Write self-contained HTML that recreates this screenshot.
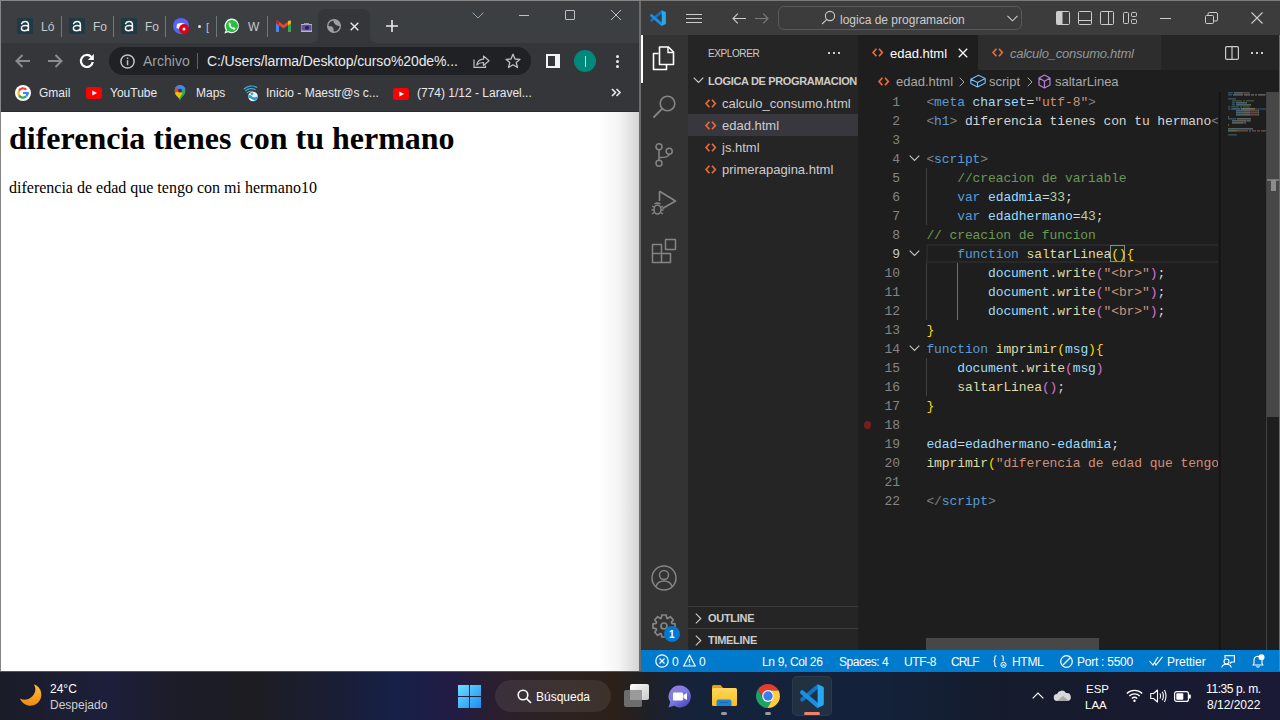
<!DOCTYPE html>
<html><head><meta charset="utf-8">
<style>
*{box-sizing:border-box;margin:0;padding:0}
html,body{width:1280px;height:720px;overflow:hidden;background:#1b1b1f;font-family:"Liberation Sans",sans-serif}
.a{position:absolute}
.t{position:absolute;white-space:pre;line-height:1}
svg{position:absolute;overflow:visible}
</style></head><body>

<!-- ============ CHROME WINDOW ============ -->
<div class="a" style="left:0;top:0;width:641px;height:672px;background:#868686"></div>
<div class="a" style="left:639px;top:1px;width:2px;height:671px;background:#6c6c6c"></div>
<div class="a" style="left:0px;top:671px;width:641px;height:1px;background:#555555"></div>
<div class="a" id="tabstrip" style="left:1px;top:1px;width:638px;height:42px;background:#3c3f42"></div>
<div class="a" id="toolbar" style="left:1px;top:43px;width:638px;height:69px;background:#35363a"></div>
<div class="a" id="page" style="left:1px;top:112px;width:638px;height:559px;background:#fff"></div>
<div class="a" style="left:598px;top:112px;width:41px;height:559px;background:linear-gradient(90deg,rgba(0,0,0,0) 0%,rgba(0,0,0,0.04) 50%,rgba(0,0,0,0.17) 100%)"></div>


<!-- tabs -->
<div class="a" style="left:17px;top:18px;width:16px;height:16px;background:#1f3a44"></div>
<svg style="left:17px;top:18px" width="16" height="16" viewBox="0 0 16 16"><path d="M4.6 5.6 Q5.6 3.6 8.2 3.6 Q11.4 3.6 11.4 7 V12.6 M11.4 9.3 Q11.4 7.6 8.2 7.6 Q4.4 7.6 4.4 10.2 Q4.4 12.7 7.6 12.7 Q10.4 12.7 11.4 10.6" stroke="#f4f4f4" stroke-width="1.5" fill="none" stroke-linecap="round"/></svg>
<div class="t" style="left:41px;top:19.5px;font:12px 'Liberation Sans';color:#c6c9cc">Ló</div>
<div class="a" style="left:61px;top:16px;width:1px;height:21px;background:#74777a"></div>
<div class="a" style="left:69px;top:18px;width:16px;height:16px;background:#1f3a44"></div>
<svg style="left:69px;top:18px" width="16" height="16" viewBox="0 0 16 16"><path d="M4.6 5.6 Q5.6 3.6 8.2 3.6 Q11.4 3.6 11.4 7 V12.6 M11.4 9.3 Q11.4 7.6 8.2 7.6 Q4.4 7.6 4.4 10.2 Q4.4 12.7 7.6 12.7 Q10.4 12.7 11.4 10.6" stroke="#f4f4f4" stroke-width="1.5" fill="none" stroke-linecap="round"/></svg>
<div class="t" style="left:93px;top:19.5px;font:12px 'Liberation Sans';color:#c6c9cc">Fo</div>
<div class="a" style="left:113px;top:16px;width:1px;height:21px;background:#74777a"></div>
<div class="a" style="left:121px;top:18px;width:16px;height:16px;background:#1f3a44"></div>
<svg style="left:121px;top:18px" width="16" height="16" viewBox="0 0 16 16"><path d="M4.6 5.6 Q5.6 3.6 8.2 3.6 Q11.4 3.6 11.4 7 V12.6 M11.4 9.3 Q11.4 7.6 8.2 7.6 Q4.4 7.6 4.4 10.2 Q4.4 12.7 7.6 12.7 Q10.4 12.7 11.4 10.6" stroke="#f4f4f4" stroke-width="1.5" fill="none" stroke-linecap="round"/></svg>
<div class="t" style="left:145px;top:19.5px;font:12px 'Liberation Sans';color:#c6c9cc">Fo</div>
<div class="a" style="left:165px;top:16px;width:1px;height:21px;background:#74777a"></div>
<svg style="left:173px;top:18px" width="16" height="16" viewBox="0 0 16 16">
 <circle cx="8" cy="8" r="8" fill="#5865f2"/>
 <path d="M4 6 Q8 4 12 6 L12.5 10 Q8 12 3.5 10 Z" fill="#fff"/>
 <circle cx="11" cy="11" r="5" fill="#e0000f"/><circle cx="11" cy="11" r="1.5" fill="#fff"/>
</svg>
<div class="a" style="left:197.5px;top:25px;width:3px;height:3px;border-radius:50%;background:#dfe3e8"></div>
<div class="t" style="left:206px;top:20.5px;font:11px 'Liberation Sans';color:#b8c4d0">[</div>
<div class="a" style="left:216px;top:16px;width:1px;height:21px;background:#74777a"></div>
<svg style="left:224px;top:18px" width="16" height="16" viewBox="0 0 16 16">
 <path d="M8 0.6 A7.3 7.3 0 1 1 4.2 14.3 L0.4 15.6 L1.8 11.9 A7.3 7.3 0 0 1 8 0.6Z" fill="#fff"/>
 <path d="M8 1.9 A6.1 6.1 0 1 1 4.5 13 L2.2 13.7 L3 11.6 A6.1 6.1 0 0 1 8 1.9Z" fill="#25c13f"/>
 <path d="M5.2 4.6 Q6 4.2 6.4 5 L7 6.4 Q7 6.9 6.5 7.3 Q7.4 9 9 9.8 Q9.4 9.3 9.8 9.2 L11.2 9.9 Q11.6 10.3 11.2 11 Q10.5 11.8 9.4 11.6 Q6.6 10.8 4.9 7.9 Q4.2 5.6 5.2 4.6Z" fill="#fff"/>
</svg>
<div class="t" style="left:248px;top:20px;font:12px 'Liberation Sans';color:#c6c9cc">W</div>
<div class="a" style="left:267px;top:16px;width:1px;height:21px;background:#74777a"></div>
<svg style="left:276px;top:20px" width="15" height="12" viewBox="0 0 15 12">
 <path d="M0 2 L0 12 L3 12 L3 5 Z" fill="#4285f4"/>
 <path d="M12 12 L15 12 L15 2 L12 5Z" fill="#34a853"/>
 <path d="M0 2 Q0 0 2 0.8 L7.5 5 L13 0.8 Q15 0 15 2 L15 3 L12 5.2 L7.5 8.5 L3 5.2 L0 3Z" fill="#ea4335"/>
 <path d="M12 5.2 L15 3 L15 2 Q15 0 13 0.8 L12 1.6Z" fill="#fbbc04"/>
 <path d="M3 5.2 L0 3 L0 2 Q0 0 2 0.8 L3 1.6Z" fill="#c5221f"/>
</svg>
<svg style="left:301px;top:23px" width="11" height="9" viewBox="0 0 11 9">
 <rect x="0" y="1" width="11" height="8" fill="#b8b4c8"/><rect x="0.5" y="2" width="10" height="5.5" fill="#5e4fa2"/>
 <circle cx="6" cy="4.7" r="2" fill="#2a1f5a"/><rect x="3" y="0" width="5" height="1.5" fill="#9a96ab"/>
</svg>
<!-- active tab -->
<svg style="left:310px;top:9px" width="68" height="34" viewBox="0 0 68 34">
 <path d="M0 34 Q8 34 8 26 L8 8 Q8 0 16 0 L52 0 Q60 0 60 8 L60 26 Q60 34 68 34 Z" fill="#35363a"/>
</svg>
<svg style="left:327px;top:19px" width="14" height="14" viewBox="0 0 14 14">
 <defs><clipPath id="gc"><circle cx="7" cy="7" r="6.4"/></clipPath></defs>
 <g clip-path="url(#gc)"><rect width="14" height="14" fill="#35363a"/>
 <path d="M6.6 0 Q6 2.8 7.5 4.6 Q8.6 6.3 10.8 6.8 Q12.6 7.2 14 7.2 L14 0 Z" fill="#9aa0a6"/>
 <path d="M0 7 Q3 6.6 5 7.6 Q6.7 8.6 6.6 10.8 Q6.5 12.6 7.1 14 L0 14 Z" fill="#9aa0a6"/></g>
 <circle cx="7" cy="7" r="6.3" stroke="#9aa0a6" stroke-width="1.4" fill="none"/>
</svg>
<svg style="left:350px;top:22px" width="9" height="9" viewBox="0 0 9 9"><path d="M0.7 0.7 L8.3 8.3 M8.3 0.7 L0.7 8.3" stroke="#e8eaed" stroke-width="1.4"/></svg>
<svg style="left:386px;top:20px" width="12" height="12" viewBox="0 0 12 12"><path d="M6 0 V12 M0 6 H12" stroke="#e8eaed" stroke-width="1.6"/></svg>
<!-- window controls -->
<svg style="left:472px;top:12px" width="12" height="7" viewBox="0 0 12 7"><path d="M0.5 0.5 L6 6 L11.5 0.5" stroke="#9aa0a6" fill="none" stroke-width="1"/></svg>
<div class="a" style="left:519px;top:15px;width:10px;height:1px;background:#bdc1c6"></div>
<div class="a" style="left:565px;top:10px;width:10px;height:10px;border:1px solid #bdc1c6;border-radius:1px"></div>
<svg style="left:611px;top:10px" width="10" height="10" viewBox="0 0 10 10"><path d="M0 0 L10 10 M10 0 L0 10" stroke="#bdc1c6" stroke-width="1"/></svg>

<!-- toolbar -->
<svg style="left:15px;top:54px" width="16" height="14" viewBox="0 0 16 14"><path d="M15 7 H2 M7.5 1 L1.5 7 L7.5 13" stroke="#8a8c8f" stroke-width="2" fill="none"/></svg>
<svg style="left:47px;top:54px" width="16" height="14" viewBox="0 0 16 14"><path d="M1 7 H14 M8.5 1 L14.5 7 L8.5 13" stroke="#8a8c8f" stroke-width="2" fill="none"/></svg>
<svg style="left:80px;top:54px" width="15" height="15" viewBox="0 0 15 15"><path d="M12.8 8.04 A6 6 0 1 1 11.3 2.9" stroke="#ffffff" stroke-width="2.2" fill="none"/><path d="M13.8 -0.1 L13.8 5.9 L7.8 5.9Z" fill="#ffffff"/></svg>
<div class="a" style="left:109px;top:47px;width:422px;height:28px;border-radius:14px;background:#202124"></div>
<svg style="left:120px;top:54px" width="15" height="15" viewBox="0 0 15 15"><circle cx="7.5" cy="7.5" r="6.6" stroke="#bdc1c6" stroke-width="1.5" fill="none"/><rect x="6.8" y="6.2" width="1.5" height="5" fill="#bdc1c6"/><rect x="6.8" y="3.5" width="1.5" height="1.6" fill="#bdc1c6"/></svg>
<div class="t" style="left:143px;top:53px;font:14px 'Liberation Sans';color:#9aa0a6">Archivo</div>
<div class="a" style="left:197px;top:53px;width:1px;height:16px;background:#5f6368"></div>
<div class="t" style="left:207px;top:53px;font:14px 'Liberation Sans';letter-spacing:-0.1px;color:#e8eaed">C:/Users/larma/Desktop/curso%20de%...</div>
<svg style="left:473px;top:54px" width="17" height="14" viewBox="0 0 17 14"><path d="M1 5.5 V13.3 H12.5 V11.5" stroke="#bdc1c6" stroke-width="1.2" fill="none"/><path d="M3.8 11 Q4.5 5.5 10.5 5.2 V2 L16 6.8 L10.5 11.5 V8.5 Q6.5 8.3 3.8 11Z" stroke="#bdc1c6" stroke-width="1.2" fill="none" stroke-linejoin="round"/></svg>
<svg style="left:505px;top:53px" width="16" height="16" viewBox="0 0 16 16"><path d="M8 1.2 L10 6 L15 6.3 L11.2 9.5 L12.5 14.5 L8 11.8 L3.5 14.5 L4.8 9.5 L1 6.3 L6 6Z" stroke="#bdc1c6" stroke-width="1.3" fill="none" stroke-linejoin="round"/></svg>
<div class="a" style="left:546px;top:54px;width:14px;height:14px;background:#f1f3f4"></div>
<div class="a" style="left:548px;top:56px;width:7px;height:10px;background:#35363a"></div>
<div class="a" style="left:574px;top:50px;width:22px;height:22px;border-radius:50%;background:#00897b"></div>
<div class="a" style="left:584.5px;top:55.5px;width:1.5px;height:11px;background:#b8e0da"></div>
<div class="a" style="left:616px;top:55px;width:3px;height:3px;border-radius:50%;background:#e8eaed"></div>
<div class="a" style="left:616px;top:60px;width:3px;height:3px;border-radius:50%;background:#e8eaed"></div>
<div class="a" style="left:616px;top:65px;width:3px;height:3px;border-radius:50%;background:#e8eaed"></div>

<!-- bookmarks -->
<svg style="left:15px;top:85px" width="16" height="16" viewBox="0 0 16 16">
 <circle cx="8" cy="8" r="8" fill="#fff"/>
 <path d="M4.02 5.7 A4.6 4.6 0 0 1 11.25 4.75" stroke="#ea4335" stroke-width="2.3" fill="none"/>
 <path d="M4.02 10.3 A4.6 4.6 0 0 1 4.02 5.7" stroke="#fbbc05" stroke-width="2.3" fill="none"/>
 <path d="M11.25 11.25 A4.6 4.6 0 0 1 4.02 10.3" stroke="#34a853" stroke-width="2.3" fill="none"/>
 <path d="M12.6 8 A4.6 4.6 0 0 1 11.25 11.25" stroke="#4285f4" stroke-width="2.3" fill="none"/>
 <rect x="8" y="6.9" width="5.8" height="2.2" fill="#4285f4"/>
</svg>
<div class="t" style="left:39px;top:86px;font:12px 'Liberation Sans';color:#e8eaed">Gmail</div>
<svg style="left:86px;top:87px" width="16" height="12" viewBox="0 0 16 12"><rect width="16" height="12" rx="3" fill="#ff0000"/><path d="M6.3 3.4 L11 6 L6.3 8.6Z" fill="#fff"/></svg>
<div class="t" style="left:110px;top:86px;font:12px 'Liberation Sans';color:#e8eaed">YouTube</div>
<svg style="left:174px;top:85px" width="12" height="16" viewBox="0 0 12 17">
 <defs><clipPath id="pin"><path d="M6 0 A6 6 0 0 1 12 6 Q12 9 8.2 12.8 Q6.6 14.5 6 17 Q5.4 14.5 3.8 12.8 Q0 9 0 6 A6 6 0 0 1 6 0Z"/></clipPath></defs>
 <g clip-path="url(#pin)">
 <rect width="12" height="17" fill="#34a853"/>
 <path d="M0 0 H13 V4.6 L6 6 L1.8 1.8Z" fill="#4285f4"/>
 <path d="M0 0 L1.8 1.8 L6 6 L0 8.6Z" fill="#ea4335"/>
 <path d="M0 8.6 L6 6 L8.6 8.8 L3.6 17 H0Z" fill="#fbbc04"/>
 </g>
 <circle cx="6" cy="6" r="2.1" fill="#35363a"/>
</svg>
<div class="t" style="left:196px;top:86px;font:12px 'Liberation Sans';color:#e8eaed">Maps</div>
<svg style="left:243px;top:85px" width="16" height="17" viewBox="0 0 16 17">
 <path d="M0.8 4.2 A11 11 0 0 1 14.2 2.6" stroke="#3fa9d0" stroke-width="1.2" fill="none"/>
 <path d="M2.3 6.2 A8 8 0 0 1 12.6 5" stroke="#3fa9d0" stroke-width="1.2" fill="none"/>
 <path d="M3.8 8.2 A5 5 0 0 1 10.6 7.4" stroke="#3fa9d0" stroke-width="1.2" fill="none"/>
 <circle cx="10" cy="11.5" r="4.8" fill="#eaf6fb"/>
 <path d="M5.6 10.2 Q7.6 9.6 8.6 11 Q9.6 12.6 12 12.2 Q14.2 12 14.8 11.6 Q14.5 14.5 12 15.8 Q9 14.6 8 13.6 Q6.2 13 5.3 12.4Z" fill="#2e9fd8"/>
 <circle cx="9" cy="8.8" r="1.4" fill="#2e9fd8"/>
</svg>
<div class="t" style="left:266px;top:86px;font:12px 'Liberation Sans';color:#e8eaed">Inicio - Maestr@s c...</div>
<svg style="left:393px;top:88px" width="16" height="12" viewBox="0 0 16 12"><rect width="16" height="12" rx="3" fill="#ff0000"/><path d="M6.3 3.4 L11 6 L6.3 8.6Z" fill="#fff"/></svg>
<div class="t" style="left:417px;top:86px;font:12px 'Liberation Sans';color:#e8eaed">(774) 1/12 - Laravel...</div>
<svg style="left:611px;top:88px" width="10" height="9" viewBox="0 0 10 9"><path d="M1 1 L4.5 4.5 L1 8 M5.5 1 L9 4.5 L5.5 8" stroke="#e8eaed" stroke-width="1.6" fill="none"/></svg>
<div class="a" style="left:1px;top:111px;width:638px;height:1px;background:#2c2d30"></div>

<!-- page -->
<div class="t" style="left:9px;top:120px;font:bold 32px 'Liberation Serif';color:#000;line-height:36px">diferencia tienes con tu hermano</div>
<div class="t" style="left:9px;top:178.5px;font:16px 'Liberation Serif';color:#000;line-height:18px">diferencia de edad que tengo con mi hermano10</div>

<!-- ============ VS CODE WINDOW ============ -->
<div class="a" style="left:641px;top:0;width:639px;height:672px;background:#7a7a7a"></div>
<div class="a" id="titlebar" style="left:641px;top:1px;width:639px;height:34px;background:#3c3c3c"></div>
<div class="a" id="actbar" style="left:641px;top:35px;width:47px;height:615px;background:#333333"></div>
<div class="a" id="sidebar" style="left:688px;top:35px;width:170px;height:615px;background:#252526"></div>
<div class="a" id="editor" style="left:858px;top:35px;width:422px;height:615px;background:#1e1e1e"></div>
<div class="a" id="statusbar" style="left:641px;top:650px;width:638px;height:22px;background:#007acc"></div>


<!-- title bar -->
<svg style="left:650px;top:10px" width="16" height="16" viewBox="0 0 24 24">
 <path d="M2.2 15.6 L17.6 2.5" stroke="#0f75c4" stroke-width="4" stroke-linecap="round"/>
 <path d="M2.2 8.3 L17.6 21.5" stroke="#1b8fe2" stroke-width="4.3" stroke-linecap="round"/>
 <path d="M17.6 0.2 L22.8 2.6 Q23.8 3.1 23.8 4.2 V19.8 Q23.8 20.9 22.8 21.4 L17.6 23.8 Z" fill="#24a9f3"/>
</svg>
<div class="a" style="left:686px;top:14px;width:16px;height:1px;background:#cccccc"></div>
<div class="a" style="left:686px;top:18px;width:16px;height:1px;background:#cccccc"></div>
<div class="a" style="left:686px;top:22px;width:16px;height:1px;background:#cccccc"></div>
<svg style="left:732px;top:13px" width="14" height="11" viewBox="0 0 14 11"><path d="M14 5.5 H1.2 M5.8 0.7 L1 5.5 L5.8 10.3" stroke="#cccccc" stroke-width="1.1" fill="none"/></svg>
<svg style="left:755px;top:13px" width="14" height="11" viewBox="0 0 14 11"><path d="M0 5.5 H12.8 M8.2 0.7 L13 5.5 L8.2 10.3" stroke="#7a7a7a" stroke-width="1.1" fill="none"/></svg>
<div class="a" style="left:778px;top:6px;width:244px;height:24px;border:1px solid #5a5a5a;border-radius:6px;background:#3c3c3c"></div>
<svg style="left:821px;top:10px" width="14" height="15" viewBox="0 0 14 15"><circle cx="9" cy="6" r="4.6" stroke="#cccccc" stroke-width="1.1" fill="none"/><path d="M5.8 9.3 L1 14.2" stroke="#cccccc" stroke-width="1.2"/></svg>
<div class="t" style="left:840px;top:13px;font:12px 'Liberation Sans';color:#cccccc">logica de programacion</div>
<svg style="left:1007px;top:15px" width="11" height="7" viewBox="0 0 11 7"><path d="M0.5 0.8 L5.5 5.8 L10.5 0.8" stroke="#cccccc" stroke-width="1.1" fill="none"/></svg>
<svg style="left:1056px;top:11px" width="14" height="14" viewBox="0 0 14 14"><rect x="0.5" y="0.5" width="13" height="13" rx="1" stroke="#cccccc" fill="none"/><rect x="0.5" y="0.5" width="6" height="13" fill="#cccccc"/></svg>
<svg style="left:1078px;top:11px" width="14" height="14" viewBox="0 0 14 14"><rect x="0.5" y="0.5" width="13" height="13" rx="1" stroke="#cccccc" fill="none"/><path d="M0.5 9.5 H13.5" stroke="#cccccc"/></svg>
<svg style="left:1100px;top:11px" width="14" height="14" viewBox="0 0 14 14"><rect x="0.5" y="0.5" width="13" height="13" rx="1" stroke="#cccccc" fill="none"/><path d="M8.5 0.5 V13.5" stroke="#cccccc"/></svg>
<svg style="left:1123px;top:11px" width="14" height="14" viewBox="0 0 14 14"><rect x="0.5" y="1.5" width="5" height="11" rx="1" stroke="#cccccc" fill="none"/><rect x="8.5" y="1.5" width="5" height="4" rx="1" stroke="#cccccc" fill="none"/><rect x="8.5" y="8.5" width="5" height="4" rx="1" stroke="#cccccc" fill="none"/></svg>
<div class="a" style="left:1160px;top:18px;width:11px;height:1px;background:#cccccc"></div>
<svg style="left:1205px;top:12px" width="13" height="12" viewBox="0 0 13 12"><rect x="0.5" y="3.5" width="8" height="8" rx="1" stroke="#cccccc" fill="none"/><path d="M3 3.5 V2 Q3 0.5 4.5 0.5 H11 Q12.5 0.5 12.5 2 V8 Q12.5 9 11 9 H8.5" stroke="#cccccc" fill="none"/></svg>
<svg style="left:1251px;top:12px" width="12" height="12" viewBox="0 0 12 12"><path d="M0.5 0.5 L11.5 11.5 M11.5 0.5 L0.5 11.5" stroke="#cccccc" stroke-width="1.1"/></svg>

<!-- activity bar -->
<div class="a" style="left:641px;top:35px;width:2px;height:48px;background:#ffffff"></div>
<svg style="left:652px;top:46px" width="24" height="26" viewBox="0 0 24 26">
 <path d="M6.5 7.5 H1.5 V23.5 H14.5 V19" stroke="#fff" stroke-width="1.6" fill="none" stroke-linejoin="round"/>
 <path d="M7.5 1 H16.5 L21.5 6 V18.5 H7.5 Z" stroke="#fff" stroke-width="1.6" fill="none" stroke-linejoin="round"/>
 <path d="M16 1 V6.5 H21.5" stroke="#fff" stroke-width="1.4" fill="none"/>
</svg>
<svg style="left:652px;top:94px" width="24" height="25" viewBox="0 0 24 25"><circle cx="15.5" cy="9.5" r="7.3" stroke="#858585" stroke-width="1.6" fill="none"/><path d="M10.3 14.7 L1.5 23.5" stroke="#858585" stroke-width="1.8"/></svg>
<svg style="left:654px;top:142px" width="20" height="26" viewBox="0 0 20 26">
 <circle cx="5" cy="4.7" r="3" stroke="#858585" stroke-width="1.5" fill="none"/>
 <circle cx="15.2" cy="9.2" r="3" stroke="#858585" stroke-width="1.5" fill="none"/>
 <circle cx="5" cy="21.2" r="3" stroke="#858585" stroke-width="1.5" fill="none"/>
 <path d="M5 7.7 V18.2 M15.2 12.2 Q15 15.5 5 15.5" stroke="#858585" stroke-width="1.5" fill="none"/>
</svg>
<svg style="left:651px;top:189px" width="26" height="28" viewBox="0 0 26 28">
 <path d="M8.5 2.2 L24.5 12 L11.5 19.5" stroke="#858585" stroke-width="1.6" fill="none" stroke-linejoin="round"/>
 <path d="M8.5 2.2 V12" stroke="#858585" stroke-width="1.6"/>
 <ellipse cx="6.5" cy="20.5" rx="3.5" ry="4.5" stroke="#858585" stroke-width="1.5" fill="#333"/>
 <path d="M1 17 L3.2 18.2 M12 17 L9.8 18.2 M0.5 21 H3 M12.5 21 H10 M1 25 L3.2 23.5 M12 25 L9.8 23.5 M3.5 15 Q6.5 13 9.5 15" stroke="#858585" stroke-width="1.3" fill="none"/>
</svg>
<svg style="left:651px;top:238px" width="26" height="26" viewBox="0 0 26 26">
 <path d="M1.5 6.5 H10.5 V15.5 H19.5 V24.5 H1.5 Z M1.5 15.5 H10.5 V24.5" stroke="#858585" stroke-width="1.5" fill="none" stroke-linejoin="round"/>
 <rect x="14.5" y="1.5" width="10" height="10" rx="0.5" stroke="#858585" stroke-width="1.5" fill="none"/>
</svg>
<svg style="left:651px;top:565px" width="26" height="26" viewBox="0 0 26 26"><circle cx="13" cy="13" r="12" stroke="#858585" stroke-width="1.5" fill="none"/><circle cx="13" cy="10" r="4.5" stroke="#858585" stroke-width="1.5" fill="none"/><path d="M5 21.5 Q6.5 16 13 16 Q19.5 16 21 21.5" stroke="#858585" stroke-width="1.5" fill="none"/></svg>
<svg style="left:651px;top:612.5px" width="26" height="26" viewBox="0 0 26 26">
 <path d="M10.30 5.15 L10.86 2.01 L15.14 2.01 L15.70 5.15 L16.64 5.54 L19.26 3.71 L22.29 6.74 L20.46 9.36 L20.85 10.30 L23.99 10.86 L23.99 15.14 L20.85 15.70 L20.46 16.64 L22.29 19.26 L19.26 22.29 L16.64 20.46 L15.70 20.85 L15.14 23.99 L10.86 23.99 L10.30 20.85 L9.36 20.46 L6.74 22.29 L3.71 19.26 L5.54 16.64 L5.15 15.70 L2.01 15.14 L2.01 10.86 L5.15 10.30 L5.54 9.36 L3.71 6.74 L6.74 3.71 L9.36 5.54Z" stroke="#858585" stroke-width="1.7" fill="none" stroke-linejoin="round"/>
 <circle cx="13" cy="13" r="3" stroke="#858585" stroke-width="1.7" fill="none"/>
</svg>
<div class="a" style="left:664px;top:626px;width:16px;height:16px;border-radius:50%;background:#0078d4"></div>
<div class="t" style="left:669px;top:629px;font:bold 10px 'Liberation Sans';color:#fff">1</div>

<!-- sidebar -->
<div class="t" style="left:708px;top:48px;font:10px 'Liberation Sans';letter-spacing:-0.4px;color:#cccccc">EXPLORER</div>
<div class="a" style="left:828px;top:52px;width:2px;height:2px;background:#cccccc"></div>
<div class="a" style="left:833px;top:52px;width:2px;height:2px;background:#cccccc"></div>
<div class="a" style="left:838px;top:52px;width:2px;height:2px;background:#cccccc"></div>
<svg style="left:693px;top:77px" width="11" height="7" viewBox="0 0 11 7"><path d="M0.7 0.7 L5.5 5.5 L10.3 0.7" stroke="#cccccc" stroke-width="1.1" fill="none"/></svg>
<div class="t" style="left:708px;top:75px;font:bold 11px 'Liberation Sans';letter-spacing:-0.35px;color:#cccccc">LOGICA DE PROGRAMACION</div>
<div class="a" style="left:688px;top:114px;width:170px;height:22px;background:#37373d"></div>
<svg style="left:705px;top:98.5px" width="12" height="9" viewBox="0 0 12 9"><path d="M4.4 0.8 L1.1 4.5 L4.4 8.2 M7 0.8 L10.3 4.5 L7 8.2" stroke="#ec6a35" stroke-width="1.7" fill="none"/></svg>
<div class="t" style="left:722px;top:96px;font:13px 'Liberation Sans';color:#cccccc">calculo_consumo.html</div>
<svg style="left:705px;top:120.5px" width="12" height="9" viewBox="0 0 12 9"><path d="M4.4 0.8 L1.1 4.5 L4.4 8.2 M7 0.8 L10.3 4.5 L7 8.2" stroke="#ec6a35" stroke-width="1.7" fill="none"/></svg>
<div class="t" style="left:722px;top:118px;font:13px 'Liberation Sans';color:#cccccc">edad.html</div>
<svg style="left:705px;top:142.5px" width="12" height="9" viewBox="0 0 12 9"><path d="M4.4 0.8 L1.1 4.5 L4.4 8.2 M7 0.8 L10.3 4.5 L7 8.2" stroke="#ec6a35" stroke-width="1.7" fill="none"/></svg>
<div class="t" style="left:722px;top:140px;font:13px 'Liberation Sans';color:#cccccc">js.html</div>
<svg style="left:705px;top:164.5px" width="12" height="9" viewBox="0 0 12 9"><path d="M4.4 0.8 L1.1 4.5 L4.4 8.2 M7 0.8 L10.3 4.5 L7 8.2" stroke="#ec6a35" stroke-width="1.7" fill="none"/></svg>
<div class="t" style="left:722px;top:162px;font:13px 'Liberation Sans';color:#cccccc">primerapagina.html</div>

<div class="a" style="left:688px;top:606px;width:170px;height:1px;background:#3c3c3c"></div>
<svg style="left:695px;top:613px" width="7" height="11" viewBox="0 0 7 11"><path d="M0.8 0.7 L5.8 5.5 L0.8 10.3" stroke="#cccccc" stroke-width="1.1" fill="none"/></svg>
<div class="t" style="left:708px;top:612px;font:bold 11px 'Liberation Sans';letter-spacing:-0.3px;color:#cccccc">OUTLINE</div>
<div class="a" style="left:688px;top:628px;width:170px;height:1px;background:#3c3c3c"></div>
<svg style="left:695px;top:635px" width="7" height="11" viewBox="0 0 7 11"><path d="M0.8 0.7 L5.8 5.5 L0.8 10.3" stroke="#cccccc" stroke-width="1.1" fill="none"/></svg>
<div class="t" style="left:708px;top:634px;font:bold 11px 'Liberation Sans';letter-spacing:-0.3px;color:#cccccc">TIMELINE</div>


<!-- editor tabs -->
<div class="a" style="left:858px;top:35px;width:422px;height:35px;background:#252526"></div>
<div class="a" style="left:858px;top:35px;width:120px;height:35px;background:#1e1e1e"></div>
<div class="a" style="left:978px;top:35px;width:183px;height:35px;background:#2d2d2d"></div>
<svg style="left:872px;top:48px" width="12" height="9" viewBox="0 0 12 9"><path d="M4.4 0.8 L1.1 4.5 L4.4 8.2 M7 0.8 L10.3 4.5 L7 8.2" stroke="#ec6a35" stroke-width="1.7" fill="none"/></svg>
<div class="t" style="left:890px;top:46px;font:13px 'Liberation Sans';color:#ffffff">edad.html</div>
<svg style="left:958px;top:48px" width="10" height="10" viewBox="0 0 10 10"><path d="M0.8 0.8 L9.2 9.2 M9.2 0.8 L0.8 9.2" stroke="#ffffff" stroke-width="1.3"/></svg>
<svg style="left:992px;top:48px" width="12" height="9" viewBox="0 0 12 9"><path d="M4.4 0.8 L1.1 4.5 L4.4 8.2 M7 0.8 L10.3 4.5 L7 8.2" stroke="#ec6a35" stroke-width="1.7" fill="none"/></svg>
<div class="t" style="left:1010px;top:46px;font:italic 13px 'Liberation Sans';letter-spacing:-0.25px;color:#969696">calculo_consumo.html</div>
<svg style="left:1225px;top:46px" width="14" height="14" viewBox="0 0 14 14"><rect x="0.6" y="0.6" width="12.8" height="12.8" rx="1.2" stroke="#cccccc" stroke-width="1.2" fill="none"/><path d="M7 0.6 V13.4" stroke="#cccccc" stroke-width="1.2"/></svg>
<div class="a" style="left:1251px;top:52px;width:2px;height:2px;background:#cccccc"></div>
<div class="a" style="left:1256px;top:52px;width:2px;height:2px;background:#cccccc"></div>
<div class="a" style="left:1261px;top:52px;width:2px;height:2px;background:#cccccc"></div>

<!-- breadcrumbs -->
<svg style="left:878px;top:77px" width="12" height="9" viewBox="0 0 12 9"><path d="M4.4 0.8 L1.1 4.5 L4.4 8.2 M7 0.8 L10.3 4.5 L7 8.2" stroke="#ec6a35" stroke-width="1.7" fill="none"/></svg>
<div class="t" style="left:896px;top:74px;font:13px 'Liberation Sans';color:#a9a9a9">edad.html</div>
<svg style="left:959px;top:77px" width="6" height="10" viewBox="0 0 6 10"><path d="M0.7 0.7 L5 5 L0.7 9.3" stroke="#a9a9a9" stroke-width="1" fill="none"/></svg>
<svg style="left:970px;top:74px" width="16" height="15" viewBox="0 0 16 15"><path d="M0.8 5.2 L8.5 1.2 L15.2 4.6 V9 L7.5 13 L0.8 9.6 Z M0.8 5.2 L7.5 8.6 L15.2 4.6 M7.5 8.6 V13" stroke="#75beff" stroke-width="1.1" fill="none" stroke-linejoin="round"/></svg>
<div class="t" style="left:989px;top:74px;font:13px 'Liberation Sans';color:#a9a9a9">script</div>
<svg style="left:1027px;top:77px" width="6" height="10" viewBox="0 0 6 10"><path d="M0.7 0.7 L5 5 L0.7 9.3" stroke="#a9a9a9" stroke-width="1" fill="none"/></svg>
<svg style="left:1038px;top:74px" width="13" height="15" viewBox="0 0 13 15"><path d="M6.5 1 L12 4 V11 L6.5 14 L1 11 V4 Z M1 4 L6.5 7.3 L12 4 M6.5 7.3 V14" stroke="#b180d7" stroke-width="1.2" fill="none" stroke-linejoin="round"/></svg>
<div class="t" style="left:1055px;top:74px;font:13px 'Liberation Sans';color:#a9a9a9">saltarLinea</div>

<!-- code -->
<div class="a" style="left:926px;top:244px;width:293px;height:19px;border:2px solid #282828;border-right:none"></div>
<div class="a" style="left:926px;top:168px;width:1px;height:57px;background:#404040"></div>
<div class="a" style="left:926px;top:263px;width:1px;height:57px;background:#404040"></div>
<div class="a" style="left:957px;top:263px;width:1px;height:57px;background:#707070"></div>
<div class="a" style="left:926px;top:358px;width:1px;height:38px;background:#404040"></div>
<div class="a" style="left:1110px;top:245px;width:15px;height:17px;border:1px solid #888888;background:#0064001a"></div>
<div class="a" style="left:863.5px;top:421px;width:7.5px;height:7.5px;border-radius:50%;background:#751f1a"></div>
<div class="a" style="left:858px;top:92.5px;width:361px;height:557px;overflow:hidden">
<div class="t" style="right:319px;top:3px;font:13px 'Liberation Mono';letter-spacing:-0.1px;color:#858585;line-height:13px">1</div>
<div class="t" style="left:68.4px;top:3px;font:13px 'Liberation Mono';letter-spacing:-0.103px;line-height:13px"><span style="color:#808080">&lt;</span><span style="color:#569cd6">meta</span><span style="color:#d4d4d4"> </span><span style="color:#9cdcfe">charset</span><span style="color:#d4d4d4">=</span><span style="color:#ce9178">"utf-8"</span><span style="color:#808080">&gt;</span></div>
<div class="t" style="right:319px;top:22px;font:13px 'Liberation Mono';letter-spacing:-0.1px;color:#858585;line-height:13px">2</div>
<div class="t" style="left:68.4px;top:22px;font:13px 'Liberation Mono';letter-spacing:-0.103px;line-height:13px"><span style="color:#808080">&lt;</span><span style="color:#569cd6">h1</span><span style="color:#808080">&gt;</span><span style="color:#d4d4d4"> diferencia tienes con tu hermano</span><span style="color:#808080">&lt;/</span><span style="color:#569cd6">h1</span><span style="color:#808080">&gt;</span></div>
<div class="t" style="right:319px;top:41px;font:13px 'Liberation Mono';letter-spacing:-0.1px;color:#858585;line-height:13px">3</div>
<div class="t" style="left:68.4px;top:41px;font:13px 'Liberation Mono';letter-spacing:-0.103px;line-height:13px"></div>
<div class="t" style="right:319px;top:60px;font:13px 'Liberation Mono';letter-spacing:-0.1px;color:#858585;line-height:13px">4</div>
<div class="t" style="left:68.4px;top:60px;font:13px 'Liberation Mono';letter-spacing:-0.103px;line-height:13px"><span style="color:#808080">&lt;</span><span style="color:#569cd6">script</span><span style="color:#808080">&gt;</span></div>
<div class="t" style="right:319px;top:79px;font:13px 'Liberation Mono';letter-spacing:-0.1px;color:#858585;line-height:13px">5</div>
<div class="t" style="left:68.4px;top:79px;font:13px 'Liberation Mono';letter-spacing:-0.103px;line-height:13px"><span style="color:#d4d4d4">    </span><span style="color:#6a9955">//creacion de variable</span></div>
<div class="t" style="right:319px;top:98px;font:13px 'Liberation Mono';letter-spacing:-0.1px;color:#858585;line-height:13px">6</div>
<div class="t" style="left:68.4px;top:98px;font:13px 'Liberation Mono';letter-spacing:-0.103px;line-height:13px"><span style="color:#d4d4d4">    </span><span style="color:#569cd6">var</span><span style="color:#d4d4d4"> </span><span style="color:#9cdcfe">edadmia</span><span style="color:#d4d4d4">=</span><span style="color:#b5cea8">33</span><span style="color:#d4d4d4">;</span></div>
<div class="t" style="right:319px;top:117px;font:13px 'Liberation Mono';letter-spacing:-0.1px;color:#858585;line-height:13px">7</div>
<div class="t" style="left:68.4px;top:117px;font:13px 'Liberation Mono';letter-spacing:-0.103px;line-height:13px"><span style="color:#d4d4d4">    </span><span style="color:#569cd6">var</span><span style="color:#d4d4d4"> </span><span style="color:#9cdcfe">edadhermano</span><span style="color:#d4d4d4">=</span><span style="color:#b5cea8">43</span><span style="color:#d4d4d4">;</span></div>
<div class="t" style="right:319px;top:136px;font:13px 'Liberation Mono';letter-spacing:-0.1px;color:#858585;line-height:13px">8</div>
<div class="t" style="left:68.4px;top:136px;font:13px 'Liberation Mono';letter-spacing:-0.103px;line-height:13px"><span style="color:#6a9955">// creacion de funcion</span></div>
<div class="t" style="right:319px;top:155px;font:13px 'Liberation Mono';letter-spacing:-0.1px;color:#c6c6c6;line-height:13px">9</div>
<div class="t" style="left:68.4px;top:155px;font:13px 'Liberation Mono';letter-spacing:-0.103px;line-height:13px"><span style="color:#d4d4d4">    </span><span style="color:#569cd6">function</span><span style="color:#d4d4d4"> </span><span style="color:#dcdcaa">saltarLinea</span><span style="color:#ffd700">()</span><span style="color:#ffd700">{</span></div>
<div class="t" style="right:319px;top:174px;font:13px 'Liberation Mono';letter-spacing:-0.1px;color:#858585;line-height:13px">10</div>
<div class="t" style="left:68.4px;top:174px;font:13px 'Liberation Mono';letter-spacing:-0.103px;line-height:13px"><span style="color:#d4d4d4">        </span><span style="color:#9cdcfe">document</span><span style="color:#d4d4d4">.</span><span style="color:#dcdcaa">write</span><span style="color:#da70d6">(</span><span style="color:#ce9178">"&lt;br&gt;"</span><span style="color:#da70d6">)</span><span style="color:#d4d4d4">;</span></div>
<div class="t" style="right:319px;top:193px;font:13px 'Liberation Mono';letter-spacing:-0.1px;color:#858585;line-height:13px">11</div>
<div class="t" style="left:68.4px;top:193px;font:13px 'Liberation Mono';letter-spacing:-0.103px;line-height:13px"><span style="color:#d4d4d4">        </span><span style="color:#9cdcfe">document</span><span style="color:#d4d4d4">.</span><span style="color:#dcdcaa">write</span><span style="color:#da70d6">(</span><span style="color:#ce9178">"&lt;br&gt;"</span><span style="color:#da70d6">)</span><span style="color:#d4d4d4">;</span></div>
<div class="t" style="right:319px;top:212px;font:13px 'Liberation Mono';letter-spacing:-0.1px;color:#858585;line-height:13px">12</div>
<div class="t" style="left:68.4px;top:212px;font:13px 'Liberation Mono';letter-spacing:-0.103px;line-height:13px"><span style="color:#d4d4d4">        </span><span style="color:#9cdcfe">document</span><span style="color:#d4d4d4">.</span><span style="color:#dcdcaa">write</span><span style="color:#da70d6">(</span><span style="color:#ce9178">"&lt;br&gt;"</span><span style="color:#da70d6">)</span><span style="color:#d4d4d4">;</span></div>
<div class="t" style="right:319px;top:231px;font:13px 'Liberation Mono';letter-spacing:-0.1px;color:#858585;line-height:13px">13</div>
<div class="t" style="left:68.4px;top:231px;font:13px 'Liberation Mono';letter-spacing:-0.103px;line-height:13px"><span style="color:#ffd700">}</span></div>
<div class="t" style="right:319px;top:250px;font:13px 'Liberation Mono';letter-spacing:-0.1px;color:#858585;line-height:13px">14</div>
<div class="t" style="left:68.4px;top:250px;font:13px 'Liberation Mono';letter-spacing:-0.103px;line-height:13px"><span style="color:#569cd6">function</span><span style="color:#d4d4d4"> </span><span style="color:#dcdcaa">imprimir</span><span style="color:#ffd700">(</span><span style="color:#9cdcfe">msg</span><span style="color:#ffd700">)</span><span style="color:#ffd700">{</span></div>
<div class="t" style="right:319px;top:269px;font:13px 'Liberation Mono';letter-spacing:-0.1px;color:#858585;line-height:13px">15</div>
<div class="t" style="left:68.4px;top:269px;font:13px 'Liberation Mono';letter-spacing:-0.103px;line-height:13px"><span style="color:#d4d4d4">    </span><span style="color:#9cdcfe">document</span><span style="color:#d4d4d4">.</span><span style="color:#dcdcaa">write</span><span style="color:#da70d6">(</span><span style="color:#9cdcfe">msg</span><span style="color:#da70d6">)</span></div>
<div class="t" style="right:319px;top:288px;font:13px 'Liberation Mono';letter-spacing:-0.1px;color:#858585;line-height:13px">16</div>
<div class="t" style="left:68.4px;top:288px;font:13px 'Liberation Mono';letter-spacing:-0.103px;line-height:13px"><span style="color:#d4d4d4">    </span><span style="color:#dcdcaa">saltarLinea</span><span style="color:#da70d6">()</span><span style="color:#d4d4d4">;</span></div>
<div class="t" style="right:319px;top:307px;font:13px 'Liberation Mono';letter-spacing:-0.1px;color:#858585;line-height:13px">17</div>
<div class="t" style="left:68.4px;top:307px;font:13px 'Liberation Mono';letter-spacing:-0.103px;line-height:13px"><span style="color:#ffd700">}</span></div>
<div class="t" style="right:319px;top:326px;font:13px 'Liberation Mono';letter-spacing:-0.1px;color:#858585;line-height:13px">18</div>
<div class="t" style="left:68.4px;top:326px;font:13px 'Liberation Mono';letter-spacing:-0.103px;line-height:13px"></div>
<div class="t" style="right:319px;top:345px;font:13px 'Liberation Mono';letter-spacing:-0.1px;color:#858585;line-height:13px">19</div>
<div class="t" style="left:68.4px;top:345px;font:13px 'Liberation Mono';letter-spacing:-0.103px;line-height:13px"><span style="color:#9cdcfe">edad</span><span style="color:#d4d4d4">=</span><span style="color:#9cdcfe">edadhermano</span><span style="color:#d4d4d4">-</span><span style="color:#9cdcfe">edadmia</span><span style="color:#d4d4d4">;</span></div>
<div class="t" style="right:319px;top:364px;font:13px 'Liberation Mono';letter-spacing:-0.1px;color:#858585;line-height:13px">20</div>
<div class="t" style="left:68.4px;top:364px;font:13px 'Liberation Mono';letter-spacing:-0.103px;line-height:13px"><span style="color:#dcdcaa">imprimir</span><span style="color:#ffd700">(</span><span style="color:#ce9178">"diferencia de edad que tengo con mi hermano"</span><span style="color:#ffd700">)</span><span style="color:#d4d4d4">;</span></div>
<div class="t" style="right:319px;top:383px;font:13px 'Liberation Mono';letter-spacing:-0.1px;color:#858585;line-height:13px">21</div>
<div class="t" style="left:68.4px;top:383px;font:13px 'Liberation Mono';letter-spacing:-0.103px;line-height:13px"></div>
<div class="t" style="right:319px;top:402px;font:13px 'Liberation Mono';letter-spacing:-0.1px;color:#858585;line-height:13px">22</div>
<div class="t" style="left:68.4px;top:402px;font:13px 'Liberation Mono';letter-spacing:-0.103px;line-height:13px"><span style="color:#808080">&lt;/</span><span style="color:#569cd6">script</span><span style="color:#808080">&gt;</span></div>
</div>
<svg style="left:909px;top:155px" width="11" height="7" viewBox="0 0 11 7"><path d="M0.7 0.7 L5.5 5.5 L10.3 0.7" stroke="#c5c5c5" stroke-width="1.1" fill="none"/></svg>
<svg style="left:909px;top:250px" width="11" height="7" viewBox="0 0 11 7"><path d="M0.7 0.7 L5.5 5.5 L10.3 0.7" stroke="#c5c5c5" stroke-width="1.1" fill="none"/></svg>
<svg style="left:909px;top:345px" width="11" height="7" viewBox="0 0 11 7"><path d="M0.7 0.7 L5.5 5.5 L10.3 0.7" stroke="#c5c5c5" stroke-width="1.1" fill="none"/></svg>

<!-- minimap & scrollbars -->
<div class="a" style="left:1218px;top:92px;width:3px;height:558px;background:linear-gradient(90deg,#1e1e1e,#121212 60%,#1a1a1a)"></div>
<div class="a" style="left:1228px;top:108px;width:38px;height:2px;background:#264f78;opacity:0.6"></div>
<div class="a" style="left:1266px;top:92px;width:1px;height:558px;background:#404040"></div>
<div class="a" style="left:1267px;top:92px;width:12px;height:325px;background:#474747"></div>
<div class="a" style="left:1267px;top:179px;width:12px;height:2px;background:#7a7a7a"></div>
<div class="a" style="left:1271px;top:180px;width:5px;height:11px;background:#8c8c8c"></div>
<div class="a" style="left:1279px;top:35px;width:1px;height:615px;background:#6a6a6a"></div>
<div class="a" style="left:926px;top:638px;width:173px;height:12px;background:#474747"></div>
<svg style="left:1228px;top:92px" width="38" height="44" viewBox="0 0 38 44"><rect x="0" y="0.2" width="0.9" height="1.3" fill="#808080" opacity="0.5"/><rect x="1" y="0.2" width="0.9" height="1.3" fill="#569cd6" opacity="0.5"/><rect x="2" y="0.2" width="0.9" height="1.3" fill="#569cd6" opacity="0.5"/><rect x="3" y="0.2" width="0.9" height="1.3" fill="#569cd6" opacity="0.5"/><rect x="4" y="0.2" width="0.9" height="1.3" fill="#569cd6" opacity="0.5"/><rect x="6" y="0.2" width="0.9" height="1.3" fill="#9cdcfe" opacity="0.5"/><rect x="7" y="0.2" width="0.9" height="1.3" fill="#9cdcfe" opacity="0.5"/><rect x="8" y="0.2" width="0.9" height="1.3" fill="#9cdcfe" opacity="0.5"/><rect x="9" y="0.2" width="0.9" height="1.3" fill="#9cdcfe" opacity="0.5"/><rect x="10" y="0.2" width="0.9" height="1.3" fill="#9cdcfe" opacity="0.5"/><rect x="11" y="0.2" width="0.9" height="1.3" fill="#9cdcfe" opacity="0.5"/><rect x="12" y="0.2" width="0.9" height="1.3" fill="#9cdcfe" opacity="0.5"/><rect x="13" y="0.2" width="0.9" height="1.3" fill="#d4d4d4" opacity="0.5"/><rect x="14" y="0.2" width="0.9" height="1.3" fill="#ce9178" opacity="0.5"/><rect x="15" y="0.2" width="0.9" height="1.3" fill="#ce9178" opacity="0.5"/><rect x="16" y="0.2" width="0.9" height="1.3" fill="#ce9178" opacity="0.5"/><rect x="17" y="0.2" width="0.9" height="1.3" fill="#ce9178" opacity="0.5"/><rect x="18" y="0.2" width="0.9" height="1.3" fill="#ce9178" opacity="0.5"/><rect x="19" y="0.2" width="0.9" height="1.3" fill="#ce9178" opacity="0.5"/><rect x="20" y="0.2" width="0.9" height="1.3" fill="#ce9178" opacity="0.5"/><rect x="21" y="0.2" width="0.9" height="1.3" fill="#808080" opacity="0.5"/><rect x="0" y="2.2" width="0.9" height="1.3" fill="#808080" opacity="0.5"/><rect x="1" y="2.2" width="0.9" height="1.3" fill="#569cd6" opacity="0.5"/><rect x="2" y="2.2" width="0.9" height="1.3" fill="#569cd6" opacity="0.5"/><rect x="3" y="2.2" width="0.9" height="1.3" fill="#808080" opacity="0.5"/><rect x="5" y="2.2" width="0.9" height="1.3" fill="#d4d4d4" opacity="0.5"/><rect x="6" y="2.2" width="0.9" height="1.3" fill="#d4d4d4" opacity="0.5"/><rect x="7" y="2.2" width="0.9" height="1.3" fill="#d4d4d4" opacity="0.5"/><rect x="8" y="2.2" width="0.9" height="1.3" fill="#d4d4d4" opacity="0.5"/><rect x="9" y="2.2" width="0.9" height="1.3" fill="#d4d4d4" opacity="0.5"/><rect x="10" y="2.2" width="0.9" height="1.3" fill="#d4d4d4" opacity="0.5"/><rect x="11" y="2.2" width="0.9" height="1.3" fill="#d4d4d4" opacity="0.5"/><rect x="12" y="2.2" width="0.9" height="1.3" fill="#d4d4d4" opacity="0.5"/><rect x="13" y="2.2" width="0.9" height="1.3" fill="#d4d4d4" opacity="0.5"/><rect x="14" y="2.2" width="0.9" height="1.3" fill="#d4d4d4" opacity="0.5"/><rect x="16" y="2.2" width="0.9" height="1.3" fill="#d4d4d4" opacity="0.5"/><rect x="17" y="2.2" width="0.9" height="1.3" fill="#d4d4d4" opacity="0.5"/><rect x="18" y="2.2" width="0.9" height="1.3" fill="#d4d4d4" opacity="0.5"/><rect x="19" y="2.2" width="0.9" height="1.3" fill="#d4d4d4" opacity="0.5"/><rect x="20" y="2.2" width="0.9" height="1.3" fill="#d4d4d4" opacity="0.5"/><rect x="21" y="2.2" width="0.9" height="1.3" fill="#d4d4d4" opacity="0.5"/><rect x="23" y="2.2" width="0.9" height="1.3" fill="#d4d4d4" opacity="0.5"/><rect x="24" y="2.2" width="0.9" height="1.3" fill="#d4d4d4" opacity="0.5"/><rect x="25" y="2.2" width="0.9" height="1.3" fill="#d4d4d4" opacity="0.5"/><rect x="27" y="2.2" width="0.9" height="1.3" fill="#d4d4d4" opacity="0.5"/><rect x="28" y="2.2" width="0.9" height="1.3" fill="#d4d4d4" opacity="0.5"/><rect x="30" y="2.2" width="0.9" height="1.3" fill="#d4d4d4" opacity="0.5"/><rect x="31" y="2.2" width="0.9" height="1.3" fill="#d4d4d4" opacity="0.5"/><rect x="32" y="2.2" width="0.9" height="1.3" fill="#d4d4d4" opacity="0.5"/><rect x="33" y="2.2" width="0.9" height="1.3" fill="#d4d4d4" opacity="0.5"/><rect x="34" y="2.2" width="0.9" height="1.3" fill="#d4d4d4" opacity="0.5"/><rect x="35" y="2.2" width="0.9" height="1.3" fill="#d4d4d4" opacity="0.5"/><rect x="36" y="2.2" width="0.9" height="1.3" fill="#d4d4d4" opacity="0.5"/><rect x="37" y="2.2" width="0.9" height="1.3" fill="#808080" opacity="0.5"/><rect x="0" y="6.2" width="0.9" height="1.3" fill="#808080" opacity="0.5"/><rect x="1" y="6.2" width="0.9" height="1.3" fill="#569cd6" opacity="0.5"/><rect x="2" y="6.2" width="0.9" height="1.3" fill="#569cd6" opacity="0.5"/><rect x="3" y="6.2" width="0.9" height="1.3" fill="#569cd6" opacity="0.5"/><rect x="4" y="6.2" width="0.9" height="1.3" fill="#569cd6" opacity="0.5"/><rect x="5" y="6.2" width="0.9" height="1.3" fill="#569cd6" opacity="0.5"/><rect x="6" y="6.2" width="0.9" height="1.3" fill="#569cd6" opacity="0.5"/><rect x="7" y="6.2" width="0.9" height="1.3" fill="#808080" opacity="0.5"/><rect x="4" y="8.2" width="0.9" height="1.3" fill="#6a9955" opacity="0.5"/><rect x="5" y="8.2" width="0.9" height="1.3" fill="#6a9955" opacity="0.5"/><rect x="6" y="8.2" width="0.9" height="1.3" fill="#6a9955" opacity="0.5"/><rect x="7" y="8.2" width="0.9" height="1.3" fill="#6a9955" opacity="0.5"/><rect x="8" y="8.2" width="0.9" height="1.3" fill="#6a9955" opacity="0.5"/><rect x="9" y="8.2" width="0.9" height="1.3" fill="#6a9955" opacity="0.5"/><rect x="10" y="8.2" width="0.9" height="1.3" fill="#6a9955" opacity="0.5"/><rect x="11" y="8.2" width="0.9" height="1.3" fill="#6a9955" opacity="0.5"/><rect x="12" y="8.2" width="0.9" height="1.3" fill="#6a9955" opacity="0.5"/><rect x="13" y="8.2" width="0.9" height="1.3" fill="#6a9955" opacity="0.5"/><rect x="15" y="8.2" width="0.9" height="1.3" fill="#6a9955" opacity="0.5"/><rect x="16" y="8.2" width="0.9" height="1.3" fill="#6a9955" opacity="0.5"/><rect x="18" y="8.2" width="0.9" height="1.3" fill="#6a9955" opacity="0.5"/><rect x="19" y="8.2" width="0.9" height="1.3" fill="#6a9955" opacity="0.5"/><rect x="20" y="8.2" width="0.9" height="1.3" fill="#6a9955" opacity="0.5"/><rect x="21" y="8.2" width="0.9" height="1.3" fill="#6a9955" opacity="0.5"/><rect x="22" y="8.2" width="0.9" height="1.3" fill="#6a9955" opacity="0.5"/><rect x="23" y="8.2" width="0.9" height="1.3" fill="#6a9955" opacity="0.5"/><rect x="24" y="8.2" width="0.9" height="1.3" fill="#6a9955" opacity="0.5"/><rect x="25" y="8.2" width="0.9" height="1.3" fill="#6a9955" opacity="0.5"/><rect x="4" y="10.2" width="0.9" height="1.3" fill="#569cd6" opacity="0.5"/><rect x="5" y="10.2" width="0.9" height="1.3" fill="#569cd6" opacity="0.5"/><rect x="6" y="10.2" width="0.9" height="1.3" fill="#569cd6" opacity="0.5"/><rect x="8" y="10.2" width="0.9" height="1.3" fill="#9cdcfe" opacity="0.5"/><rect x="9" y="10.2" width="0.9" height="1.3" fill="#9cdcfe" opacity="0.5"/><rect x="10" y="10.2" width="0.9" height="1.3" fill="#9cdcfe" opacity="0.5"/><rect x="11" y="10.2" width="0.9" height="1.3" fill="#9cdcfe" opacity="0.5"/><rect x="12" y="10.2" width="0.9" height="1.3" fill="#9cdcfe" opacity="0.5"/><rect x="13" y="10.2" width="0.9" height="1.3" fill="#9cdcfe" opacity="0.5"/><rect x="14" y="10.2" width="0.9" height="1.3" fill="#9cdcfe" opacity="0.5"/><rect x="15" y="10.2" width="0.9" height="1.3" fill="#d4d4d4" opacity="0.5"/><rect x="16" y="10.2" width="0.9" height="1.3" fill="#b5cea8" opacity="0.5"/><rect x="17" y="10.2" width="0.9" height="1.3" fill="#b5cea8" opacity="0.5"/><rect x="18" y="10.2" width="0.9" height="1.3" fill="#d4d4d4" opacity="0.5"/><rect x="4" y="12.2" width="0.9" height="1.3" fill="#569cd6" opacity="0.5"/><rect x="5" y="12.2" width="0.9" height="1.3" fill="#569cd6" opacity="0.5"/><rect x="6" y="12.2" width="0.9" height="1.3" fill="#569cd6" opacity="0.5"/><rect x="8" y="12.2" width="0.9" height="1.3" fill="#9cdcfe" opacity="0.5"/><rect x="9" y="12.2" width="0.9" height="1.3" fill="#9cdcfe" opacity="0.5"/><rect x="10" y="12.2" width="0.9" height="1.3" fill="#9cdcfe" opacity="0.5"/><rect x="11" y="12.2" width="0.9" height="1.3" fill="#9cdcfe" opacity="0.5"/><rect x="12" y="12.2" width="0.9" height="1.3" fill="#9cdcfe" opacity="0.5"/><rect x="13" y="12.2" width="0.9" height="1.3" fill="#9cdcfe" opacity="0.5"/><rect x="14" y="12.2" width="0.9" height="1.3" fill="#9cdcfe" opacity="0.5"/><rect x="15" y="12.2" width="0.9" height="1.3" fill="#9cdcfe" opacity="0.5"/><rect x="16" y="12.2" width="0.9" height="1.3" fill="#9cdcfe" opacity="0.5"/><rect x="17" y="12.2" width="0.9" height="1.3" fill="#9cdcfe" opacity="0.5"/><rect x="18" y="12.2" width="0.9" height="1.3" fill="#9cdcfe" opacity="0.5"/><rect x="19" y="12.2" width="0.9" height="1.3" fill="#d4d4d4" opacity="0.5"/><rect x="20" y="12.2" width="0.9" height="1.3" fill="#b5cea8" opacity="0.5"/><rect x="21" y="12.2" width="0.9" height="1.3" fill="#b5cea8" opacity="0.5"/><rect x="22" y="12.2" width="0.9" height="1.3" fill="#d4d4d4" opacity="0.5"/><rect x="0" y="14.2" width="0.9" height="1.3" fill="#6a9955" opacity="0.5"/><rect x="1" y="14.2" width="0.9" height="1.3" fill="#6a9955" opacity="0.5"/><rect x="3" y="14.2" width="0.9" height="1.3" fill="#6a9955" opacity="0.5"/><rect x="4" y="14.2" width="0.9" height="1.3" fill="#6a9955" opacity="0.5"/><rect x="5" y="14.2" width="0.9" height="1.3" fill="#6a9955" opacity="0.5"/><rect x="6" y="14.2" width="0.9" height="1.3" fill="#6a9955" opacity="0.5"/><rect x="7" y="14.2" width="0.9" height="1.3" fill="#6a9955" opacity="0.5"/><rect x="8" y="14.2" width="0.9" height="1.3" fill="#6a9955" opacity="0.5"/><rect x="9" y="14.2" width="0.9" height="1.3" fill="#6a9955" opacity="0.5"/><rect x="10" y="14.2" width="0.9" height="1.3" fill="#6a9955" opacity="0.5"/><rect x="12" y="14.2" width="0.9" height="1.3" fill="#6a9955" opacity="0.5"/><rect x="13" y="14.2" width="0.9" height="1.3" fill="#6a9955" opacity="0.5"/><rect x="15" y="14.2" width="0.9" height="1.3" fill="#6a9955" opacity="0.5"/><rect x="16" y="14.2" width="0.9" height="1.3" fill="#6a9955" opacity="0.5"/><rect x="17" y="14.2" width="0.9" height="1.3" fill="#6a9955" opacity="0.5"/><rect x="18" y="14.2" width="0.9" height="1.3" fill="#6a9955" opacity="0.5"/><rect x="19" y="14.2" width="0.9" height="1.3" fill="#6a9955" opacity="0.5"/><rect x="20" y="14.2" width="0.9" height="1.3" fill="#6a9955" opacity="0.5"/><rect x="21" y="14.2" width="0.9" height="1.3" fill="#6a9955" opacity="0.5"/><rect x="4" y="16.2" width="0.9" height="1.3" fill="#569cd6" opacity="0.5"/><rect x="5" y="16.2" width="0.9" height="1.3" fill="#569cd6" opacity="0.5"/><rect x="6" y="16.2" width="0.9" height="1.3" fill="#569cd6" opacity="0.5"/><rect x="7" y="16.2" width="0.9" height="1.3" fill="#569cd6" opacity="0.5"/><rect x="8" y="16.2" width="0.9" height="1.3" fill="#569cd6" opacity="0.5"/><rect x="9" y="16.2" width="0.9" height="1.3" fill="#569cd6" opacity="0.5"/><rect x="10" y="16.2" width="0.9" height="1.3" fill="#569cd6" opacity="0.5"/><rect x="11" y="16.2" width="0.9" height="1.3" fill="#569cd6" opacity="0.5"/><rect x="13" y="16.2" width="0.9" height="1.3" fill="#dcdcaa" opacity="0.5"/><rect x="14" y="16.2" width="0.9" height="1.3" fill="#dcdcaa" opacity="0.5"/><rect x="15" y="16.2" width="0.9" height="1.3" fill="#dcdcaa" opacity="0.5"/><rect x="16" y="16.2" width="0.9" height="1.3" fill="#dcdcaa" opacity="0.5"/><rect x="17" y="16.2" width="0.9" height="1.3" fill="#dcdcaa" opacity="0.5"/><rect x="18" y="16.2" width="0.9" height="1.3" fill="#dcdcaa" opacity="0.5"/><rect x="19" y="16.2" width="0.9" height="1.3" fill="#dcdcaa" opacity="0.5"/><rect x="20" y="16.2" width="0.9" height="1.3" fill="#dcdcaa" opacity="0.5"/><rect x="21" y="16.2" width="0.9" height="1.3" fill="#dcdcaa" opacity="0.5"/><rect x="22" y="16.2" width="0.9" height="1.3" fill="#dcdcaa" opacity="0.5"/><rect x="23" y="16.2" width="0.9" height="1.3" fill="#dcdcaa" opacity="0.5"/><rect x="24" y="16.2" width="0.9" height="1.3" fill="#ffd700" opacity="0.5"/><rect x="25" y="16.2" width="0.9" height="1.3" fill="#ffd700" opacity="0.5"/><rect x="26" y="16.2" width="0.9" height="1.3" fill="#ffd700" opacity="0.5"/><rect x="8" y="18.2" width="0.9" height="1.3" fill="#9cdcfe" opacity="0.5"/><rect x="9" y="18.2" width="0.9" height="1.3" fill="#9cdcfe" opacity="0.5"/><rect x="10" y="18.2" width="0.9" height="1.3" fill="#9cdcfe" opacity="0.5"/><rect x="11" y="18.2" width="0.9" height="1.3" fill="#9cdcfe" opacity="0.5"/><rect x="12" y="18.2" width="0.9" height="1.3" fill="#9cdcfe" opacity="0.5"/><rect x="13" y="18.2" width="0.9" height="1.3" fill="#9cdcfe" opacity="0.5"/><rect x="14" y="18.2" width="0.9" height="1.3" fill="#9cdcfe" opacity="0.5"/><rect x="15" y="18.2" width="0.9" height="1.3" fill="#9cdcfe" opacity="0.5"/><rect x="16" y="18.2" width="0.9" height="1.3" fill="#d4d4d4" opacity="0.5"/><rect x="17" y="18.2" width="0.9" height="1.3" fill="#dcdcaa" opacity="0.5"/><rect x="18" y="18.2" width="0.9" height="1.3" fill="#dcdcaa" opacity="0.5"/><rect x="19" y="18.2" width="0.9" height="1.3" fill="#dcdcaa" opacity="0.5"/><rect x="20" y="18.2" width="0.9" height="1.3" fill="#dcdcaa" opacity="0.5"/><rect x="21" y="18.2" width="0.9" height="1.3" fill="#dcdcaa" opacity="0.5"/><rect x="22" y="18.2" width="0.9" height="1.3" fill="#da70d6" opacity="0.5"/><rect x="23" y="18.2" width="0.9" height="1.3" fill="#ce9178" opacity="0.5"/><rect x="24" y="18.2" width="0.9" height="1.3" fill="#ce9178" opacity="0.5"/><rect x="25" y="18.2" width="0.9" height="1.3" fill="#ce9178" opacity="0.5"/><rect x="26" y="18.2" width="0.9" height="1.3" fill="#ce9178" opacity="0.5"/><rect x="27" y="18.2" width="0.9" height="1.3" fill="#ce9178" opacity="0.5"/><rect x="28" y="18.2" width="0.9" height="1.3" fill="#ce9178" opacity="0.5"/><rect x="29" y="18.2" width="0.9" height="1.3" fill="#da70d6" opacity="0.5"/><rect x="30" y="18.2" width="0.9" height="1.3" fill="#d4d4d4" opacity="0.5"/><rect x="8" y="20.2" width="0.9" height="1.3" fill="#9cdcfe" opacity="0.5"/><rect x="9" y="20.2" width="0.9" height="1.3" fill="#9cdcfe" opacity="0.5"/><rect x="10" y="20.2" width="0.9" height="1.3" fill="#9cdcfe" opacity="0.5"/><rect x="11" y="20.2" width="0.9" height="1.3" fill="#9cdcfe" opacity="0.5"/><rect x="12" y="20.2" width="0.9" height="1.3" fill="#9cdcfe" opacity="0.5"/><rect x="13" y="20.2" width="0.9" height="1.3" fill="#9cdcfe" opacity="0.5"/><rect x="14" y="20.2" width="0.9" height="1.3" fill="#9cdcfe" opacity="0.5"/><rect x="15" y="20.2" width="0.9" height="1.3" fill="#9cdcfe" opacity="0.5"/><rect x="16" y="20.2" width="0.9" height="1.3" fill="#d4d4d4" opacity="0.5"/><rect x="17" y="20.2" width="0.9" height="1.3" fill="#dcdcaa" opacity="0.5"/><rect x="18" y="20.2" width="0.9" height="1.3" fill="#dcdcaa" opacity="0.5"/><rect x="19" y="20.2" width="0.9" height="1.3" fill="#dcdcaa" opacity="0.5"/><rect x="20" y="20.2" width="0.9" height="1.3" fill="#dcdcaa" opacity="0.5"/><rect x="21" y="20.2" width="0.9" height="1.3" fill="#dcdcaa" opacity="0.5"/><rect x="22" y="20.2" width="0.9" height="1.3" fill="#da70d6" opacity="0.5"/><rect x="23" y="20.2" width="0.9" height="1.3" fill="#ce9178" opacity="0.5"/><rect x="24" y="20.2" width="0.9" height="1.3" fill="#ce9178" opacity="0.5"/><rect x="25" y="20.2" width="0.9" height="1.3" fill="#ce9178" opacity="0.5"/><rect x="26" y="20.2" width="0.9" height="1.3" fill="#ce9178" opacity="0.5"/><rect x="27" y="20.2" width="0.9" height="1.3" fill="#ce9178" opacity="0.5"/><rect x="28" y="20.2" width="0.9" height="1.3" fill="#ce9178" opacity="0.5"/><rect x="29" y="20.2" width="0.9" height="1.3" fill="#da70d6" opacity="0.5"/><rect x="30" y="20.2" width="0.9" height="1.3" fill="#d4d4d4" opacity="0.5"/><rect x="8" y="22.2" width="0.9" height="1.3" fill="#9cdcfe" opacity="0.5"/><rect x="9" y="22.2" width="0.9" height="1.3" fill="#9cdcfe" opacity="0.5"/><rect x="10" y="22.2" width="0.9" height="1.3" fill="#9cdcfe" opacity="0.5"/><rect x="11" y="22.2" width="0.9" height="1.3" fill="#9cdcfe" opacity="0.5"/><rect x="12" y="22.2" width="0.9" height="1.3" fill="#9cdcfe" opacity="0.5"/><rect x="13" y="22.2" width="0.9" height="1.3" fill="#9cdcfe" opacity="0.5"/><rect x="14" y="22.2" width="0.9" height="1.3" fill="#9cdcfe" opacity="0.5"/><rect x="15" y="22.2" width="0.9" height="1.3" fill="#9cdcfe" opacity="0.5"/><rect x="16" y="22.2" width="0.9" height="1.3" fill="#d4d4d4" opacity="0.5"/><rect x="17" y="22.2" width="0.9" height="1.3" fill="#dcdcaa" opacity="0.5"/><rect x="18" y="22.2" width="0.9" height="1.3" fill="#dcdcaa" opacity="0.5"/><rect x="19" y="22.2" width="0.9" height="1.3" fill="#dcdcaa" opacity="0.5"/><rect x="20" y="22.2" width="0.9" height="1.3" fill="#dcdcaa" opacity="0.5"/><rect x="21" y="22.2" width="0.9" height="1.3" fill="#dcdcaa" opacity="0.5"/><rect x="22" y="22.2" width="0.9" height="1.3" fill="#da70d6" opacity="0.5"/><rect x="23" y="22.2" width="0.9" height="1.3" fill="#ce9178" opacity="0.5"/><rect x="24" y="22.2" width="0.9" height="1.3" fill="#ce9178" opacity="0.5"/><rect x="25" y="22.2" width="0.9" height="1.3" fill="#ce9178" opacity="0.5"/><rect x="26" y="22.2" width="0.9" height="1.3" fill="#ce9178" opacity="0.5"/><rect x="27" y="22.2" width="0.9" height="1.3" fill="#ce9178" opacity="0.5"/><rect x="28" y="22.2" width="0.9" height="1.3" fill="#ce9178" opacity="0.5"/><rect x="29" y="22.2" width="0.9" height="1.3" fill="#da70d6" opacity="0.5"/><rect x="30" y="22.2" width="0.9" height="1.3" fill="#d4d4d4" opacity="0.5"/><rect x="0" y="24.2" width="0.9" height="1.3" fill="#ffd700" opacity="0.5"/><rect x="0" y="26.2" width="0.9" height="1.3" fill="#569cd6" opacity="0.5"/><rect x="1" y="26.2" width="0.9" height="1.3" fill="#569cd6" opacity="0.5"/><rect x="2" y="26.2" width="0.9" height="1.3" fill="#569cd6" opacity="0.5"/><rect x="3" y="26.2" width="0.9" height="1.3" fill="#569cd6" opacity="0.5"/><rect x="4" y="26.2" width="0.9" height="1.3" fill="#569cd6" opacity="0.5"/><rect x="5" y="26.2" width="0.9" height="1.3" fill="#569cd6" opacity="0.5"/><rect x="6" y="26.2" width="0.9" height="1.3" fill="#569cd6" opacity="0.5"/><rect x="7" y="26.2" width="0.9" height="1.3" fill="#569cd6" opacity="0.5"/><rect x="9" y="26.2" width="0.9" height="1.3" fill="#dcdcaa" opacity="0.5"/><rect x="10" y="26.2" width="0.9" height="1.3" fill="#dcdcaa" opacity="0.5"/><rect x="11" y="26.2" width="0.9" height="1.3" fill="#dcdcaa" opacity="0.5"/><rect x="12" y="26.2" width="0.9" height="1.3" fill="#dcdcaa" opacity="0.5"/><rect x="13" y="26.2" width="0.9" height="1.3" fill="#dcdcaa" opacity="0.5"/><rect x="14" y="26.2" width="0.9" height="1.3" fill="#dcdcaa" opacity="0.5"/><rect x="15" y="26.2" width="0.9" height="1.3" fill="#dcdcaa" opacity="0.5"/><rect x="16" y="26.2" width="0.9" height="1.3" fill="#dcdcaa" opacity="0.5"/><rect x="17" y="26.2" width="0.9" height="1.3" fill="#ffd700" opacity="0.5"/><rect x="18" y="26.2" width="0.9" height="1.3" fill="#9cdcfe" opacity="0.5"/><rect x="19" y="26.2" width="0.9" height="1.3" fill="#9cdcfe" opacity="0.5"/><rect x="20" y="26.2" width="0.9" height="1.3" fill="#9cdcfe" opacity="0.5"/><rect x="21" y="26.2" width="0.9" height="1.3" fill="#ffd700" opacity="0.5"/><rect x="22" y="26.2" width="0.9" height="1.3" fill="#ffd700" opacity="0.5"/><rect x="4" y="28.2" width="0.9" height="1.3" fill="#9cdcfe" opacity="0.5"/><rect x="5" y="28.2" width="0.9" height="1.3" fill="#9cdcfe" opacity="0.5"/><rect x="6" y="28.2" width="0.9" height="1.3" fill="#9cdcfe" opacity="0.5"/><rect x="7" y="28.2" width="0.9" height="1.3" fill="#9cdcfe" opacity="0.5"/><rect x="8" y="28.2" width="0.9" height="1.3" fill="#9cdcfe" opacity="0.5"/><rect x="9" y="28.2" width="0.9" height="1.3" fill="#9cdcfe" opacity="0.5"/><rect x="10" y="28.2" width="0.9" height="1.3" fill="#9cdcfe" opacity="0.5"/><rect x="11" y="28.2" width="0.9" height="1.3" fill="#9cdcfe" opacity="0.5"/><rect x="12" y="28.2" width="0.9" height="1.3" fill="#d4d4d4" opacity="0.5"/><rect x="13" y="28.2" width="0.9" height="1.3" fill="#dcdcaa" opacity="0.5"/><rect x="14" y="28.2" width="0.9" height="1.3" fill="#dcdcaa" opacity="0.5"/><rect x="15" y="28.2" width="0.9" height="1.3" fill="#dcdcaa" opacity="0.5"/><rect x="16" y="28.2" width="0.9" height="1.3" fill="#dcdcaa" opacity="0.5"/><rect x="17" y="28.2" width="0.9" height="1.3" fill="#dcdcaa" opacity="0.5"/><rect x="18" y="28.2" width="0.9" height="1.3" fill="#da70d6" opacity="0.5"/><rect x="19" y="28.2" width="0.9" height="1.3" fill="#9cdcfe" opacity="0.5"/><rect x="20" y="28.2" width="0.9" height="1.3" fill="#9cdcfe" opacity="0.5"/><rect x="21" y="28.2" width="0.9" height="1.3" fill="#9cdcfe" opacity="0.5"/><rect x="22" y="28.2" width="0.9" height="1.3" fill="#da70d6" opacity="0.5"/><rect x="4" y="30.2" width="0.9" height="1.3" fill="#dcdcaa" opacity="0.5"/><rect x="5" y="30.2" width="0.9" height="1.3" fill="#dcdcaa" opacity="0.5"/><rect x="6" y="30.2" width="0.9" height="1.3" fill="#dcdcaa" opacity="0.5"/><rect x="7" y="30.2" width="0.9" height="1.3" fill="#dcdcaa" opacity="0.5"/><rect x="8" y="30.2" width="0.9" height="1.3" fill="#dcdcaa" opacity="0.5"/><rect x="9" y="30.2" width="0.9" height="1.3" fill="#dcdcaa" opacity="0.5"/><rect x="10" y="30.2" width="0.9" height="1.3" fill="#dcdcaa" opacity="0.5"/><rect x="11" y="30.2" width="0.9" height="1.3" fill="#dcdcaa" opacity="0.5"/><rect x="12" y="30.2" width="0.9" height="1.3" fill="#dcdcaa" opacity="0.5"/><rect x="13" y="30.2" width="0.9" height="1.3" fill="#dcdcaa" opacity="0.5"/><rect x="14" y="30.2" width="0.9" height="1.3" fill="#dcdcaa" opacity="0.5"/><rect x="15" y="30.2" width="0.9" height="1.3" fill="#da70d6" opacity="0.5"/><rect x="16" y="30.2" width="0.9" height="1.3" fill="#da70d6" opacity="0.5"/><rect x="17" y="30.2" width="0.9" height="1.3" fill="#d4d4d4" opacity="0.5"/><rect x="0" y="32.2" width="0.9" height="1.3" fill="#ffd700" opacity="0.5"/><rect x="0" y="36.2" width="0.9" height="1.3" fill="#9cdcfe" opacity="0.5"/><rect x="1" y="36.2" width="0.9" height="1.3" fill="#9cdcfe" opacity="0.5"/><rect x="2" y="36.2" width="0.9" height="1.3" fill="#9cdcfe" opacity="0.5"/><rect x="3" y="36.2" width="0.9" height="1.3" fill="#9cdcfe" opacity="0.5"/><rect x="4" y="36.2" width="0.9" height="1.3" fill="#d4d4d4" opacity="0.5"/><rect x="5" y="36.2" width="0.9" height="1.3" fill="#9cdcfe" opacity="0.5"/><rect x="6" y="36.2" width="0.9" height="1.3" fill="#9cdcfe" opacity="0.5"/><rect x="7" y="36.2" width="0.9" height="1.3" fill="#9cdcfe" opacity="0.5"/><rect x="8" y="36.2" width="0.9" height="1.3" fill="#9cdcfe" opacity="0.5"/><rect x="9" y="36.2" width="0.9" height="1.3" fill="#9cdcfe" opacity="0.5"/><rect x="10" y="36.2" width="0.9" height="1.3" fill="#9cdcfe" opacity="0.5"/><rect x="11" y="36.2" width="0.9" height="1.3" fill="#9cdcfe" opacity="0.5"/><rect x="12" y="36.2" width="0.9" height="1.3" fill="#9cdcfe" opacity="0.5"/><rect x="13" y="36.2" width="0.9" height="1.3" fill="#9cdcfe" opacity="0.5"/><rect x="14" y="36.2" width="0.9" height="1.3" fill="#9cdcfe" opacity="0.5"/><rect x="15" y="36.2" width="0.9" height="1.3" fill="#9cdcfe" opacity="0.5"/><rect x="16" y="36.2" width="0.9" height="1.3" fill="#d4d4d4" opacity="0.5"/><rect x="17" y="36.2" width="0.9" height="1.3" fill="#9cdcfe" opacity="0.5"/><rect x="18" y="36.2" width="0.9" height="1.3" fill="#9cdcfe" opacity="0.5"/><rect x="19" y="36.2" width="0.9" height="1.3" fill="#9cdcfe" opacity="0.5"/><rect x="20" y="36.2" width="0.9" height="1.3" fill="#9cdcfe" opacity="0.5"/><rect x="21" y="36.2" width="0.9" height="1.3" fill="#9cdcfe" opacity="0.5"/><rect x="22" y="36.2" width="0.9" height="1.3" fill="#9cdcfe" opacity="0.5"/><rect x="23" y="36.2" width="0.9" height="1.3" fill="#9cdcfe" opacity="0.5"/><rect x="24" y="36.2" width="0.9" height="1.3" fill="#d4d4d4" opacity="0.5"/><rect x="0" y="38.2" width="0.9" height="1.3" fill="#dcdcaa" opacity="0.5"/><rect x="1" y="38.2" width="0.9" height="1.3" fill="#dcdcaa" opacity="0.5"/><rect x="2" y="38.2" width="0.9" height="1.3" fill="#dcdcaa" opacity="0.5"/><rect x="3" y="38.2" width="0.9" height="1.3" fill="#dcdcaa" opacity="0.5"/><rect x="4" y="38.2" width="0.9" height="1.3" fill="#dcdcaa" opacity="0.5"/><rect x="5" y="38.2" width="0.9" height="1.3" fill="#dcdcaa" opacity="0.5"/><rect x="6" y="38.2" width="0.9" height="1.3" fill="#dcdcaa" opacity="0.5"/><rect x="7" y="38.2" width="0.9" height="1.3" fill="#dcdcaa" opacity="0.5"/><rect x="8" y="38.2" width="0.9" height="1.3" fill="#ffd700" opacity="0.5"/><rect x="9" y="38.2" width="0.9" height="1.3" fill="#ce9178" opacity="0.5"/><rect x="10" y="38.2" width="0.9" height="1.3" fill="#ce9178" opacity="0.5"/><rect x="11" y="38.2" width="0.9" height="1.3" fill="#ce9178" opacity="0.5"/><rect x="12" y="38.2" width="0.9" height="1.3" fill="#ce9178" opacity="0.5"/><rect x="13" y="38.2" width="0.9" height="1.3" fill="#ce9178" opacity="0.5"/><rect x="14" y="38.2" width="0.9" height="1.3" fill="#ce9178" opacity="0.5"/><rect x="15" y="38.2" width="0.9" height="1.3" fill="#ce9178" opacity="0.5"/><rect x="16" y="38.2" width="0.9" height="1.3" fill="#ce9178" opacity="0.5"/><rect x="17" y="38.2" width="0.9" height="1.3" fill="#ce9178" opacity="0.5"/><rect x="18" y="38.2" width="0.9" height="1.3" fill="#ce9178" opacity="0.5"/><rect x="19" y="38.2" width="0.9" height="1.3" fill="#ce9178" opacity="0.5"/><rect x="21" y="38.2" width="0.9" height="1.3" fill="#ce9178" opacity="0.5"/><rect x="22" y="38.2" width="0.9" height="1.3" fill="#ce9178" opacity="0.5"/><rect x="24" y="38.2" width="0.9" height="1.3" fill="#ce9178" opacity="0.5"/><rect x="25" y="38.2" width="0.9" height="1.3" fill="#ce9178" opacity="0.5"/><rect x="26" y="38.2" width="0.9" height="1.3" fill="#ce9178" opacity="0.5"/><rect x="27" y="38.2" width="0.9" height="1.3" fill="#ce9178" opacity="0.5"/><rect x="29" y="38.2" width="0.9" height="1.3" fill="#ce9178" opacity="0.5"/><rect x="30" y="38.2" width="0.9" height="1.3" fill="#ce9178" opacity="0.5"/><rect x="31" y="38.2" width="0.9" height="1.3" fill="#ce9178" opacity="0.5"/><rect x="33" y="38.2" width="0.9" height="1.3" fill="#ce9178" opacity="0.5"/><rect x="34" y="38.2" width="0.9" height="1.3" fill="#ce9178" opacity="0.5"/><rect x="35" y="38.2" width="0.9" height="1.3" fill="#ce9178" opacity="0.5"/><rect x="36" y="38.2" width="0.9" height="1.3" fill="#ce9178" opacity="0.5"/><rect x="37" y="38.2" width="0.9" height="1.3" fill="#ce9178" opacity="0.5"/><rect x="0" y="42.2" width="0.9" height="1.3" fill="#808080" opacity="0.5"/><rect x="1" y="42.2" width="0.9" height="1.3" fill="#808080" opacity="0.5"/><rect x="2" y="42.2" width="0.9" height="1.3" fill="#569cd6" opacity="0.5"/><rect x="3" y="42.2" width="0.9" height="1.3" fill="#569cd6" opacity="0.5"/><rect x="4" y="42.2" width="0.9" height="1.3" fill="#569cd6" opacity="0.5"/><rect x="5" y="42.2" width="0.9" height="1.3" fill="#569cd6" opacity="0.5"/><rect x="6" y="42.2" width="0.9" height="1.3" fill="#569cd6" opacity="0.5"/><rect x="7" y="42.2" width="0.9" height="1.3" fill="#569cd6" opacity="0.5"/><rect x="8" y="42.2" width="0.9" height="1.3" fill="#808080" opacity="0.5"/></svg>

<!-- status bar -->
<svg style="left:655px;top:654px" width="14" height="14" viewBox="0 0 14 14"><circle cx="7" cy="7" r="6.2" stroke="#fff" stroke-width="1.2" fill="none"/><path d="M4.5 4.5 L9.5 9.5 M9.5 4.5 L4.5 9.5" stroke="#fff" stroke-width="1.2"/></svg>
<div class="t" style="left:672px;top:655px;font:12px 'Liberation Sans';color:#fff">0</div>
<svg style="left:683px;top:654px" width="13" height="13" viewBox="0 0 13 13"><path d="M6.5 1 L12.3 12 H0.7 Z" stroke="#fff" stroke-width="1.2" fill="none" stroke-linejoin="round"/><path d="M6.5 5 V8.8 M6.5 10 V11" stroke="#fff" stroke-width="1.2"/></svg>
<div class="t" style="left:699px;top:655px;font:12px 'Liberation Sans';color:#fff">0</div>
<div class="t" style="left:762px;top:655px;font:12px 'Liberation Sans';letter-spacing:-0.35px;color:#fff">Ln 9, Col 26</div>
<div class="t" style="left:839px;top:655px;font:12px 'Liberation Sans';letter-spacing:-0.45px;color:#fff">Spaces: 4</div>
<div class="t" style="left:904px;top:655px;font:12px 'Liberation Sans';letter-spacing:-0.4px;color:#fff">UTF-8</div>
<div class="t" style="left:951px;top:655px;font:12px 'Liberation Sans';letter-spacing:-0.9px;color:#fff">CRLF</div>
<svg style="left:993px;top:655px" width="14" height="13" viewBox="0 0 14 13"><path d="M3.5 0.8 Q1.8 0.8 1.8 2.5 V4.8 Q1.8 6 0.6 6.3 Q1.8 6.6 1.8 7.8 V10 Q1.8 11.7 3.5 11.7" stroke="#fff" stroke-width="1.1" fill="none"/><path d="M8.5 0.8 Q10.2 0.8 10.2 2.5 V6" stroke="#fff" stroke-width="1.1" fill="none"/><circle cx="10.5" cy="9.8" r="2.6" stroke="#fff" stroke-width="1" fill="#007acc"/><path d="M9.3 8.6 L11.7 11 M11.7 8.6 L9.3 11" stroke="#fff" stroke-width="0.9"/></svg>
<div class="t" style="left:1012px;top:655px;font:12px 'Liberation Sans';letter-spacing:-0.3px;color:#fff">HTML</div>
<svg style="left:1060px;top:655px" width="13" height="13" viewBox="0 0 13 13"><circle cx="6.5" cy="6.5" r="5.8" stroke="#fff" stroke-width="1.2" fill="none"/><path d="M10.5 2.5 L2.5 10.5" stroke="#fff" stroke-width="1.2"/></svg>
<div class="t" style="left:1077px;top:655px;font:12px 'Liberation Sans';letter-spacing:-0.25px;color:#fff">Port : 5500</div>
<svg style="left:1149px;top:656px" width="14" height="10" viewBox="0 0 14 10"><path d="M0.5 5 L4 9 L9 1 M5.5 6.5 L7 9 L13.5 0.8" stroke="#fff" stroke-width="1.1" fill="none"/></svg>
<div class="t" style="left:1167px;top:655px;font:12px 'Liberation Sans';color:#fff">Prettier</div>
<svg style="left:1221px;top:655px" width="14" height="13" viewBox="0 0 14 13"><path d="M4 3.5 V0.6 H13.4 V7 H10.5 L9 8.5" stroke="#fff" stroke-width="1.1" fill="none"/><circle cx="5.5" cy="6.5" r="2.5" stroke="#fff" stroke-width="1.1" fill="none"/><path d="M0.8 12.5 Q1.3 9.3 5.5 9.3 Q9.7 9.3 10.2 12.5" stroke="#fff" stroke-width="1.1" fill="none"/></svg>
<svg style="left:1252px;top:654px" width="14" height="14" viewBox="0 0 14 14"><path d="M1 11 H11 L10 9.5 V6 Q10 2.5 6 2.2 Q2 2.5 2 6 V9.5Z" stroke="#fff" stroke-width="1.1" fill="none" stroke-linejoin="round"/><path d="M4.5 12.3 Q6 13.8 7.5 12.3" stroke="#fff" stroke-width="1.1" fill="none"/><circle cx="9.5" cy="3.3" r="3" fill="#fff"/></svg>
<div class="a" style="left:641px;top:671px;width:639px;height:1px;background:#5e5e5e"></div>

<!-- ============ TASKBAR ============ -->
<div class="a" id="taskbar" style="left:0;top:672px;width:1280px;height:48px;background:linear-gradient(90deg,#1a1c28 0px,#1c1e34 70px,#1c1f3c 110px,#1c1c2a 170px,#1d1c22 250px,#1a1e34 330px,#162048 400px,#221c46 450px,#2a1f2c 500px,#2e2220 560px,#2c2019 615px,#1e2028 650px,#15223a 690px,#13233a 740px,#13223a 880px,#151b2c 1000px,#171a2e 1100px,#1b1a36 1280px)"></div>


<!-- taskbar items -->
<svg style="left:20px;top:684px" width="23" height="23" viewBox="0 0 23 23"><defs><linearGradient id="moon" x1="0" y1="0" x2="0" y2="1"><stop offset="0" stop-color="#fbc23b"/><stop offset="1" stop-color="#f08a10"/></linearGradient></defs><path d="M14 0.3 A11 11 0 1 1 0 14.5 A10.5 10.5 0 0 0 14 0.3Z" fill="url(#moon)"/></svg>
<div class="t" style="left:50px;top:682px;font:12px 'Liberation Sans';color:#ffffff">24°C</div>
<div class="t" style="left:50px;top:697.5px;font:12px 'Liberation Sans';color:#cfcfd4">Despejado</div>

<svg style="left:458px;top:685px" width="23" height="23" viewBox="0 0 23 23"><defs><linearGradient id="win" x1="0" y1="0" x2="1" y2="1"><stop offset="0" stop-color="#6ce0ff"/><stop offset="1" stop-color="#1a8cf5"/></linearGradient></defs><path d="M0 0 H11 V11 H0Z M12 0 H23 V11 H12Z M0 12 H11 V23 H0Z M12 12 H23 V23 H12Z" fill="url(#win)"/></svg>
<div class="a" style="left:495px;top:680px;width:116px;height:32px;border-radius:16px;background:rgba(255,255,255,0.08)"></div>
<svg style="left:517px;top:689px" width="15" height="15" viewBox="0 0 15 15"><circle cx="6" cy="6" r="4.8" stroke="#fff" stroke-width="1.6" fill="none"/><path d="M9.5 9.5 L14 14" stroke="#fff" stroke-width="1.7"/></svg>
<div class="t" style="left:536px;top:690px;font:12px 'Liberation Sans';color:#ffffff">Búsqueda</div>

<svg style="left:624px;top:684px" width="25" height="23" viewBox="0 0 25 23"><defs><linearGradient id="tv1" x1="0" y1="0" x2="1" y2="1"><stop offset="0" stop-color="#ffffff"/><stop offset="1" stop-color="#c8c8c8"/></linearGradient></defs><rect x="0" y="6" width="18" height="17" rx="2" fill="#6d6d6d"/><rect x="6" y="0" width="19" height="16" rx="2" fill="url(#tv1)"/><rect x="6" y="6" width="12" height="10" fill="#9a9a9a"/></svg>
<svg style="left:668px;top:685px" width="24" height="23" viewBox="0 0 24 23"><defs><linearGradient id="tm" x1="0" y1="0.2" x2="0.6" y2="1"><stop offset="0" stop-color="#9a78d8"/><stop offset="0.5" stop-color="#7a7ee6"/><stop offset="1" stop-color="#5a50c0"/></linearGradient></defs><path d="M12 0.5 A11 11 0 1 1 6 20.8 L0.5 22.5 L2.2 17.2 A11 11 0 0 1 12 0.5Z" fill="url(#tm)"/><rect x="5" y="7.5" width="10" height="8" rx="1.2" fill="#fff"/><path d="M15.5 10 L19 8 V15 L15.5 13Z" fill="#fff"/></svg>
<svg style="left:712px;top:685px" width="25" height="21" viewBox="0 0 25 21"><defs><linearGradient id="fd" x1="0" y1="0" x2="0" y2="1"><stop offset="0" stop-color="#ffd75a"/><stop offset="1" stop-color="#fbbd1e"/></linearGradient></defs><path d="M0 1.5 Q0 0 1.5 0 H8.5 L11 2.8 V5 H0Z" fill="#e3a10a"/><path d="M0 4.5 Q0 3 1.5 3 H23.5 Q25 3 25 4.5 V19.5 Q25 21 23.5 21 H1.5 Q0 21 0 19.5Z" fill="url(#fd)"/><path d="M4.5 16.5 Q4.5 14.5 6.5 14.5 H17.5 Q19.5 14.5 19.5 16.5 V21 H4.5Z" fill="#1c85d8"/><rect x="7.5" y="17" width="9" height="1" fill="#1769b8"/></svg>
<div class="a" style="left:721px;top:712px;width:6px;height:3px;border-radius:2px;background:#9a9aa0"></div>
<svg style="left:756px;top:684px" width="24" height="24" viewBox="0 0 24 24">
 <path d="M12 6.5 H22.66 A12 12 0 0 0 1.91 5.52 L7.24 14.75 A5.5 5.5 0 0 1 12 6.5 Z" fill="#e33b2e"/>
 <path d="M1.91 5.52 A12 12 0 0 0 11.43 23.98 L16.76 14.75 A5.5 5.5 0 0 1 7.24 14.75 Z" fill="#1da462"/>
 <path d="M12 6.5 H22.66 A12 12 0 0 1 11.43 23.98 L16.76 14.75 A5.5 5.5 0 0 0 12 6.5 Z" fill="#ffcd40"/>
 <circle cx="12" cy="12" r="5.9" fill="#fff"/><circle cx="12" cy="12" r="4.7" fill="#3b7bf0"/>
</svg>
<div class="a" style="left:765px;top:712px;width:6px;height:3px;border-radius:2px;background:#9a9aa0"></div>
<div class="a" style="left:792px;top:676px;width:40px;height:40px;border-radius:5px;background:#213142;border:1px solid rgba(255,255,255,0.05)"></div>
<svg style="left:800px;top:684px" width="24" height="24" viewBox="0 0 24 24">
 <path d="M2.2 15.6 L17.6 2.5" stroke="#0f75c4" stroke-width="4" stroke-linecap="round"/>
 <path d="M2.2 8.3 L17.6 21.5" stroke="#1b8fe2" stroke-width="4.3" stroke-linecap="round"/>
 <path d="M17.6 0.2 L22.8 2.6 Q23.8 3.1 23.8 4.2 V19.8 Q23.8 20.9 22.8 21.4 L17.6 23.8 Z" fill="#24a9f3"/>
</svg>
<div class="a" style="left:804px;top:712px;width:16px;height:3px;border-radius:2px;background:#f1826a"></div>

<svg style="left:1032px;top:692px" width="12" height="7" viewBox="0 0 12 7"><path d="M0.7 6.3 L6 1 L11.3 6.3" stroke="#fff" stroke-width="1.2" fill="none"/></svg>
<svg style="left:1054px;top:690px" width="17" height="11" viewBox="0 0 17 11"><path d="M3.5 11 A3.5 3.5 0 0 1 3 4 A5 5 0 0 1 12 3 A4 4 0 0 1 13.5 11Z" fill="#d8d8d8"/><path d="M3 11 L9 6 L15 11Z" fill="#a8a8a8"/></svg>
<div class="t" style="left:1086px;top:683px;font:11.5px 'Liberation Sans';color:#fff">ESP</div>
<div class="t" style="left:1085px;top:699px;font:11.5px 'Liberation Sans';color:#fff">LAA</div>
<svg style="left:1126px;top:689px" width="17" height="13" viewBox="0 0 17 13"><path d="M0.8 4.5 A11 11 0 0 1 16.2 4.5 M3.3 7 A7.5 7.5 0 0 1 13.7 7 M5.8 9.5 A4 4 0 0 1 11.2 9.5" stroke="#fff" stroke-width="1.3" fill="none"/><circle cx="8.5" cy="11.8" r="1.2" fill="#fff"/></svg>
<svg style="left:1150px;top:689px" width="17" height="14" viewBox="0 0 17 14"><path d="M0.7 4.5 H3.5 L7.5 1 V13 L3.5 9.5 H0.7Z" stroke="#fff" stroke-width="1.1" fill="none" stroke-linejoin="round"/><path d="M10 4.5 Q11.3 7 10 9.5 M12.3 2.8 Q14.5 7 12.3 11.2 M14.5 1 Q17.5 7 14.5 13" stroke="#fff" stroke-width="1.1" fill="none"/></svg>
<svg style="left:1174px;top:691px" width="17" height="11" viewBox="0 0 17 11"><rect x="0.6" y="0.6" width="13.8" height="9.8" rx="2" stroke="#fff" stroke-width="1.2" fill="none"/><rect x="2.3" y="2.3" width="7" height="6.4" rx="0.8" fill="#fff"/><rect x="15" y="3.5" width="1.8" height="4" rx="0.5" fill="#fff"/></svg>
<div class="t" style="left:1206px;top:682px;font:12px 'Liberation Sans';letter-spacing:-0.4px;color:#fff">11:35 p. m.</div>
<div class="t" style="left:1207px;top:698px;font:12px 'Liberation Sans';color:#fff">8/12/2022</div>

</body></html>
